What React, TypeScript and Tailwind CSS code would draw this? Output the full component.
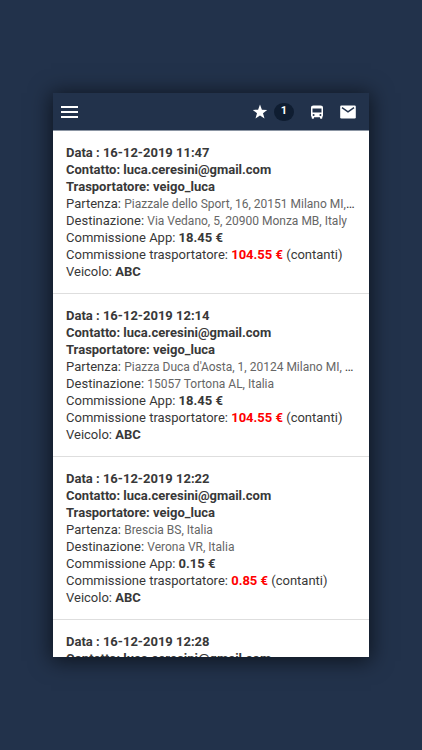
type Trip = {
  date: string;
  contact: string;
  carrier: string;
  from: string;
  to: string;
  appFee: string;
  carrierFee: string;
  vehicle: string;
};

const trips: Trip[] = [
  {
    date: '16-12-2019 11:47',
    contact: 'luca.ceresini@gmail.com',
    carrier: 'veigo_luca',
    from: 'Piazzale dello Sport, 16, 20151 Milano MI, Italy',
    to: 'Via Vedano, 5, 20900 Monza MB, Italy',
    appFee: '18.45',
    carrierFee: '104.55',
    vehicle: 'ABC',
  },
  {
    date: '16-12-2019 12:14',
    contact: 'luca.ceresini@gmail.com',
    carrier: 'veigo_luca',
    from: "Piazza Duca d'Aosta, 1, 20124 Milano MI, Italia",
    to: '15057 Tortona AL, Italia',
    appFee: '18.45',
    carrierFee: '104.55',
    vehicle: 'ABC',
  },
  {
    date: '16-12-2019 12:22',
    contact: 'luca.ceresini@gmail.com',
    carrier: 'veigo_luca',
    from: 'Brescia BS, Italia',
    to: 'Verona VR, Italia',
    appFee: '0.15',
    carrierFee: '0.85',
    vehicle: 'ABC',
  },
  {
    date: '16-12-2019 12:28',
    contact: 'luca.ceresini@gmail.com',
    carrier: 'veigo_luca',
    from: 'Brescia BS, Italia',
    to: 'Verona VR, Italia',
    appFee: '0.15',
    carrierFee: '0.85',
    vehicle: 'ABC',
  },
];

function StarIcon() {
  return (
    <svg viewBox="0 0 16 16" className="size-4" fill="currentColor" aria-hidden="true">
      <path d="M8 .6l1.900 5.100 5.300.2-4.200 3.300 1.500 5.300L8 11.500l-4.500 3 1.500-5.300L.8 5.900l5.300-.2z" />
    </svg>
  );
}

function BusIcon() {
  return (
    <svg viewBox="0 0 16 16" className="size-4" fill="currentColor" aria-hidden="true">
      <path
        fillRule="evenodd"
        d="M4.500 1.500h7c1.600 0 2.500.8 2.500 2.300v7.700c0 .6-.3 1-.7 1.400v1.100c0 .4-.3.7-.7.7h-.9c-.4 0-.7-.3-.7-.7v-.8H5v.8c0 .4-.3.7-.7.7h-.9c-.4 0-.7-.3-.7-.7v-1.100C2.300 12.500 2 12.100 2 11.500V3.800c0-1.500.900-2.300 2.500-2.300zM3.500 4.500V8.500h9V4.500zM4.600 9.900a1 1 0 100 2 1 1 0 000-2zm6.800 0a1 1 0 100 2 1 1 0 000-2z"
      />
    </svg>
  );
}

function MailIcon() {
  return (
    <svg viewBox="0 0 16 16" className="size-4" aria-hidden="true">
      <rect x="0.200" y="1.500" width="15.600" height="13" rx="1.300" fill="currentColor" />
      <path d="M2 3.600l6 4.300 6-4.300" fill="none" stroke="#22324b" strokeWidth="1.400" />
    </svg>
  );
}

function TripItem({ trip }: { trip: Trip }) {
  return (
    <li className="border-b border-[#dedede] p-[13px]">
      <p className="font-bold">Data : {trip.date}</p>
      <p className="font-bold">Contatto: {trip.contact}</p>
      <p className="font-bold">Trasportatore: {trip.carrier}</p>
      <p className="truncate">
        Partenza: <span className="text-[12px] leading-none text-[#666666]">{trip.from}</span>
      </p>
      <p className="truncate">
        Destinazione: <span className="text-[12px] leading-none text-[#666666]">{trip.to}</span>
      </p>
      <p>
        Commissione App: <b>{trip.appFee} €</b>
      </p>
      <p>
        Commissione trasportatore: <b className="text-[#ff0000]">{trip.carrierFee} €</b> (contanti)
      </p>
      <p>
        Veicolo: <b>{trip.vehicle}</b>
      </p>
    </li>
  );
}

export default function App() {
  return (
    <div className="flex h-screen flex-col bg-[#22324b] px-[53px] py-[93px] font-[Roboto,sans-serif]">
      <div className="flex min-h-0 flex-1 flex-col bg-white shadow-[0_2px_20px_2px_rgba(0,0,0,0.6)]">
        <header className="flex h-[38px] shrink-0 items-center justify-between border-b border-[#8b95a3] bg-[#22324b] pl-2 pr-[13px] text-white">
          <button type="button" aria-label="Menu" className="flex flex-col gap-[3px]">
            <span className="h-0.5 w-[17px] bg-white" />
            <span className="h-0.5 w-[17px] bg-white" />
            <span className="h-0.5 w-[17px] bg-white" />
          </button>
          <div className="flex items-center gap-[15px]">
            <button type="button" aria-label="Preferiti" className="flex items-center gap-1.5">
              <StarIcon />
              <span className="flex h-[18px] w-5 items-center justify-center rounded-full bg-[#0f1d31] text-[11px] font-bold">
                1
              </span>
            </button>
            <button type="button" aria-label="Viaggi">
              <BusIcon />
            </button>
            <button type="button" aria-label="Messaggi">
              <MailIcon />
            </button>
          </div>
        </header>
        <main className="min-h-0 flex-1 overflow-y-auto [scrollbar-width:none]">
          <ul className="text-[13px] leading-[17px] text-[#383838]">
            {trips.map((trip) => (
              <TripItem key={trip.date} trip={trip} />
            ))}
          </ul>
        </main>
      </div>
    </div>
  );
}
